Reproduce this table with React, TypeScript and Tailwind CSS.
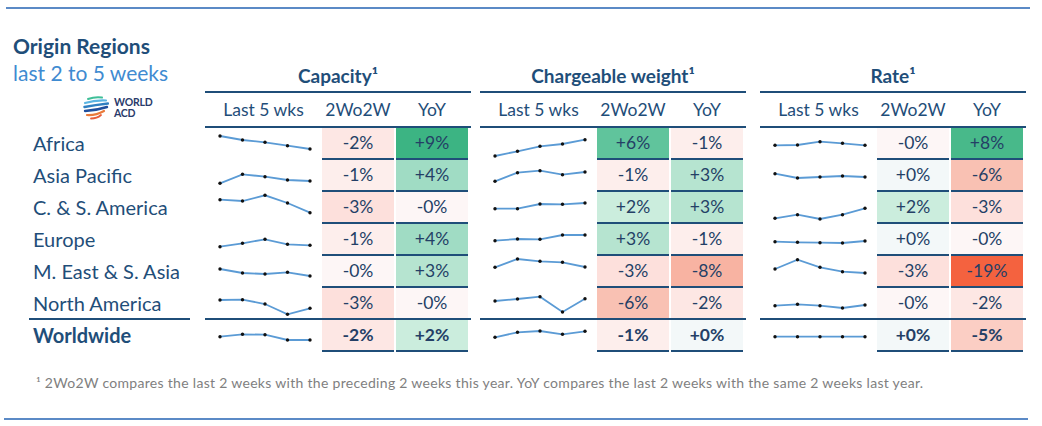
import React from "react";

const NAVY = "#1f4e79";

const REGIONS = [
  "Africa",
  "Asia Pacific",
  "C. & S. America",
  "Europe",
  "M. East & S. Asia",
  "North America",
  "Worldwide",
];

const BG: Record<string, string> = {
  "+9%": "bg-[#3cb483]",
  "+8%": "bg-[#48b98a]",
  "+6%": "bg-[#60c49c]",
  "+4%": "bg-[#a0dcc4]",
  "+3%": "bg-[#b6e4d0]",
  "+2%": "bg-[#cbeddd]",
  "+0%": "bg-[#f3f8f9]",
  "-0%": "bg-[#fdf6f6]",
  "-1%": "bg-[#fdeeec]",
  "-2%": "bg-[#fde7e4]",
  "-3%": "bg-[#fde0dc]",
  "-5%": "bg-[#fbcec4]",
  "-6%": "bg-[#f9c1b3]",
  "-8%": "bg-[#f8b3a2]",
  "-19%": "bg-[#f4623f]",
};

type Section = {
  title: string;
  gap: string;
  spark: number[][];
  w2: string[];
  yoy: string[];
};

const SECTIONS: Section[] = [
  {
    title: "Capacity",
    gap: "",
    spark: [
      [8, 12, 14.3, 17.7, 21],
      [23.3, 14.3, 16.7, 20, 21],
      [7.7, 9, 3.3, 11, 20.7],
      [22.7, 19.3, 15.3, 20.3, 21.3],
      [13, 17, 18, 16.3, 20],
      [12, 11.7, 16, 26.3, 20.3],
      [16.7, 14.3, 14.7, 20, 20],
    ],
    w2: ["-2%", "-1%", "-3%", "-1%", "-0%", "-3%", "-2%"],
    yoy: ["+9%", "+4%", "-0%", "+4%", "+3%", "-0%", "+2%"],
  },
  {
    title: "Chargeable weight",
    gap: "ml-[9px]",
    spark: [
      [28, 23.3, 18.3, 16, 11.7],
      [21.3, 12.7, 10.7, 14.7, 12],
      [16.7, 16.7, 12, 12.3, 11],
      [16.7, 15, 15.3, 11, 11],
      [11.3, 3, 5.3, 6.3, 11],
      [13, 11, 8.7, 24, 10.7],
      [17.3, 12.3, 11, 14.3, 11.3],
    ],
    w2: ["+6%", "-1%", "+2%", "+3%", "-3%", "-6%", "-1%"],
    yoy: ["-1%", "+3%", "+3%", "-1%", "-8%", "-2%", "+0%"],
  },
  {
    title: "Rate",
    gap: "ml-[14px]",
    spark: [
      [17.3, 17, 13.7, 15.3, 17.3],
      [13.7, 18, 17, 16, 17],
      [26.3, 22.7, 27, 22.7, 16.3],
      [17.7, 18.3, 18.7, 19, 17],
      [13, 3.7, 11.3, 15.7, 17],
      [17.7, 16.3, 17.7, 20, 17],
      [16.7, 16.7, 16.7, 16.7, 16.7],
    ],
    w2: ["-0%", "+0%", "+2%", "+0%", "-3%", "-0%", "+0%"],
    yoy: ["+8%", "-6%", "-3%", "-0%", "-19%", "-2%", "-5%"],
  },
];

function Spark({ ys }: { ys: number[] }) {
  const xs = [15, 37.5, 60, 82.5, 105];
  const pts = ys.map((y, i) => `${xs[i]},${y}`).join(" ");
  return (
    <svg width="117" height="30" viewBox="0 0 117 30">
      <polyline points={pts} fill="none" stroke="#5b9bd5" strokeWidth="1.8" />
      {ys.map((y, i) => (
        <circle key={i} cx={xs[i]} cy={y} r="1.7" fill="#111" />
      ))}
    </svg>
  );
}

function Logo() {
  return (
    <div className="flex items-center h-[25px] ml-[83px] gap-[5px]">
      <svg width="26" height="25" viewBox="0 0 26 25">
        <g fill="none" strokeLinecap="round">
          <path d="M5 4 Q 12 1.5 19 2.5" stroke="#3fbf98" strokeWidth="2" />
          <path d="M2 8 Q 12 5 23 5.5" stroke="#5ab4e2" strokeWidth="2.2" />
          <path d="M1.5 12 Q 12 10 25 8.5" stroke="#2f7fc1" strokeWidth="2.4" />
          <path d="M2 16 Q 13 15.5 24 12" stroke="#1f4e9c" strokeWidth="2.4" />
          <path d="M4 20 Q 13 20.5 21 16" stroke="#ea7a3a" strokeWidth="2.2" />
          <path d="M8 23.5 Q 14 23.5 18 20" stroke="#e85c3a" strokeWidth="1.8" />
        </g>
      </svg>
      <div className="text-[10.5px] font-bold leading-[11px] text-[#2a3b6b] tracking-[-0.2px]">
        <div>WORLD</div>
        <div>ACD</div>
      </div>
    </div>
  );
}

function SectionTable({ s }: { s: Section }) {
  return (
    <div className={`w-[266px] pt-[55px] ${s.gap}`}>
      <div className="h-[23px] leading-[23px] text-center text-[19px] font-bold" style={{ color: NAVY }}>
        {s.title}¹
      </div>
      <div className="mt-[4px] h-[2px] bg-[#1f4e79]" />
      <div className="flex h-[33px] items-center text-[17.5px] leading-[20px] text-[#1f4e79]">
        <div className="w-[117px] text-center">Last 5 wks</div>
        <div className="w-[72px] text-center">2Wo2W</div>
        <div className="w-[72px] ml-[2px] text-center">YoY</div>
      </div>
      <div className="h-[2px] bg-[#1f4e79]" />
      {s.spark.map((ys, r) => {
        const bold = r === 6 ? "font-bold" : "";
        return (
          <div key={r} className="flex flex-col">
            <div className="flex h-[30px] text-[17.5px] text-[#243f66]">
              <div className="w-[117px]">
                <Spark ys={ys} />
              </div>
              <div className={`w-[72px] flex items-center justify-center ${BG[s.w2[r]]} ${bold}`}>
                {s.w2[r]}
              </div>
              <div className={`w-[72px] ml-[2px] flex items-center justify-center ${BG[s.yoy[r]]} ${bold}`}>
                {s.yoy[r]}
              </div>
            </div>
            {r === 5 ? (
              <div className="h-[2px] bg-[#1f4e79]" />
            ) : (
              <div className="flex h-[2px]">
                <div className="w-[117px]" />
                <div className="w-[72px] bg-[#1f4e79]" />
                <div className="w-[72px] ml-[2px] bg-[#1f4e79]" />
              </div>
            )}
          </div>
        );
      })}
    </div>
  );
}

export default function App() {
  return (
    <div className="w-[1042px] h-[426px] bg-white font-['Lato',sans-serif] overflow-hidden">
      <div className="mt-[7px] ml-[6px] w-[1024px] h-[2px] bg-[#5b8ac6]" />
      <div className="flex">
        <div className="w-[205px] pt-[24px]">
          <div className="pl-[13px] text-[21px] leading-[25px] font-bold text-[#1f4e79]">
            Origin Regions
          </div>
          <div className="pl-[13px] mt-[2px] text-[21px] leading-[25px] text-[#3f8bd1]">
            last 2 to 5 weeks
          </div>
          <div className="mt-[10px]">
            <Logo />
          </div>
          <div className="mt-[8px]">
            {REGIONS.map((name, r) => (
              <div key={name} className="flex flex-col">
                <div
                  className={`h-[30px] flex items-center pl-[33px] text-[20px] text-[#1f4e79] ${
                    r === 6 ? "font-bold" : ""
                  }`}
                >
                  {name}
                </div>
                <div className={`h-[2px] ml-[29px] w-[161px] ${r === 5 ? "bg-[#1f4e79]" : ""}`} />
              </div>
            ))}
          </div>
        </div>
        {SECTIONS.map((s) => (
          <SectionTable key={s.title} s={s} />
        ))}
      </div>
      <div className="mt-[22px] pl-[36px] whitespace-nowrap text-[14px] leading-[17px] tracking-[0.3px] text-[#7f7f7f]">
        ¹ 2Wo2W compares the last 2 weeks with the preceding 2 weeks this year. YoY compares the last 2 weeks with
        the same 2 weeks last year.
      </div>
      <div className="mt-[27px] ml-[4px] w-[1024px] h-[2px] bg-[#5b8ac6]" />
    </div>
  );
}
